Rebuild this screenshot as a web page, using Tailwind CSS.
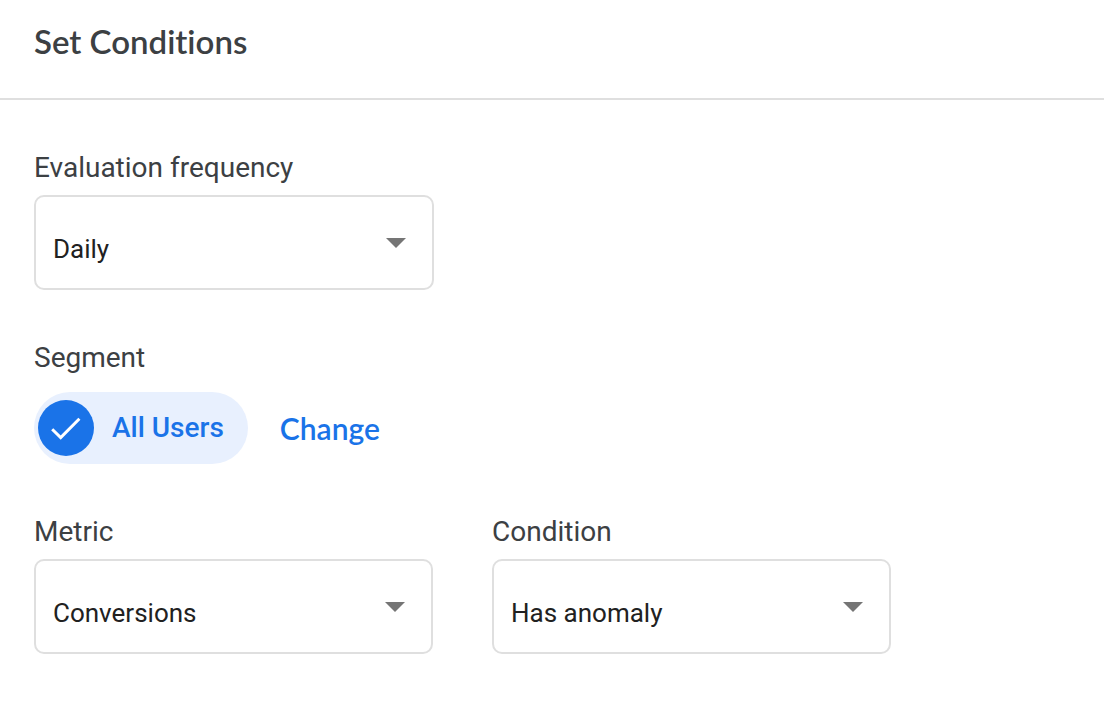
<!DOCTYPE html>
<html lang="en">
<head>
<meta charset="utf-8">
<meta name="viewport" content="width=device-width, initial-scale=1">
<title>Set Conditions</title>
<script src="https://cdn.jsdelivr.net/npm/@tailwindcss/browser@4"></script>
</head>
<body class="min-h-screen bg-white font-['Roboto',sans-serif] text-[#3c4043]">
<header class="border-b-2 border-[#dfdfdf] px-[34px] pt-[19px] pb-[35px]">
  <h1 class="font-['Lato',sans-serif] text-[33px] leading-[44px] font-semibold [font-variant-ligatures:none]">Set Conditions</h1>
</header>
<main class="px-[34px] pt-[50px] pb-12">
  <div class="flex max-w-[400px] flex-col gap-[9px]">
    <label for="frequency" class="text-[28px] leading-9">Evaluation frequency</label>
    <div class="grid items-center">
      <select id="frequency" class="col-start-1 row-start-1 h-[95px] w-full appearance-none rounded-[10px] border-2 border-[#dfdfdf] bg-white pt-[14px] pr-12 pl-[17px] text-[26px] text-[#212121]"><option>Daily</option></select>
      <svg class="pointer-events-none col-start-1 row-start-1 mr-7 h-[10px] w-5 justify-self-end" viewBox="0 0 20 10" fill="#757575" aria-hidden="true"><path d="M0 0h20L10 10z"/></svg>
    </div>
  </div>

  <section class="mt-[50px]">
    <h2 class="text-[28px] leading-9">Segment</h2>
    <div class="mt-4 flex items-center gap-8">
      <button type="button" class="flex h-[72px] items-center gap-[18px] rounded-full bg-[#e8f0fe] pr-6 pl-1 text-[28px] font-medium text-[#1a73e8]">
        <svg class="size-14" viewBox="0 0 56 56" aria-hidden="true"><circle cx="28" cy="28" r="28" fill="#1a73e8"/><path d="M14.2 29.2l8.5 8.4L41.4 18.7" fill="none" stroke="#fff" stroke-width="3"/></svg>
        All Users
      </button>
      <button type="button" class="font-['Lato',sans-serif] text-[30px] leading-9 font-semibold text-[#1a73e8]">Change</button>
    </div>
  </section>

  <div class="mt-[50px] grid max-w-[857px] grid-cols-2 gap-[59px]">
    <div class="flex flex-col gap-[9px]">
      <label for="metric" class="text-[28px] leading-9">Metric</label>
      <div class="grid items-center">
        <select id="metric" class="col-start-1 row-start-1 h-[95px] w-full appearance-none rounded-[10px] border-2 border-[#dfdfdf] bg-white pt-[14px] pr-12 pl-[17px] text-[26px] text-[#212121]"><option>Conversions</option></select>
        <svg class="pointer-events-none col-start-1 row-start-1 mr-7 h-[10px] w-5 justify-self-end" viewBox="0 0 20 10" fill="#757575" aria-hidden="true"><path d="M0 0h20L10 10z"/></svg>
      </div>
    </div>
    <div class="flex flex-col gap-[9px]">
      <label for="condition" class="text-[28px] leading-9">Condition</label>
      <div class="grid items-center">
        <select id="condition" class="col-start-1 row-start-1 h-[95px] w-full appearance-none rounded-[10px] border-2 border-[#dfdfdf] bg-white pt-[14px] pr-12 pl-[17px] text-[26px] text-[#212121]"><option>Has anomaly</option></select>
        <svg class="pointer-events-none col-start-1 row-start-1 mr-7 h-[10px] w-5 justify-self-end" viewBox="0 0 20 10" fill="#757575" aria-hidden="true"><path d="M0 0h20L10 10z"/></svg>
      </div>
    </div>
  </div>
</main>
</body>
</html>
